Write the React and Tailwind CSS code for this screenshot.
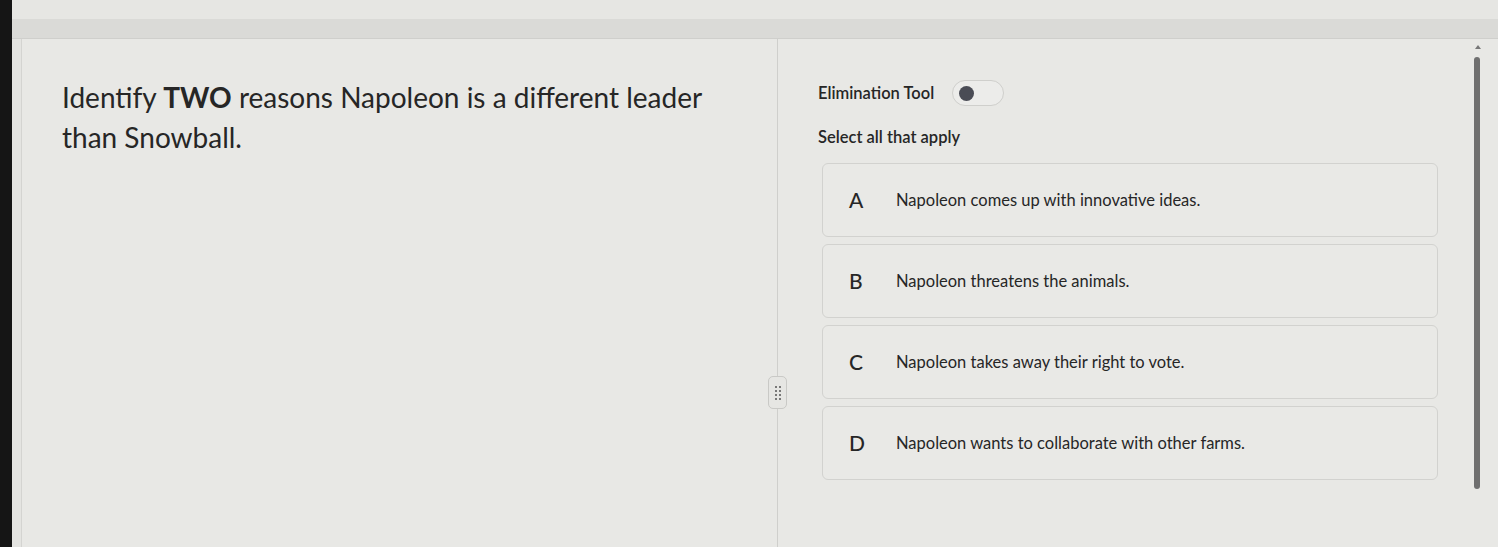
const options = [
  { letter: 'A', text: 'Napoleon comes up with innovative ideas.' },
  { letter: 'B', text: 'Napoleon threatens the animals.' },
  { letter: 'C', text: 'Napoleon takes away their right to vote.' },
  { letter: 'D', text: 'Napoleon wants to collaborate with other farms.' },
]

export default function App() {
  return (
    <div className="flex h-[547px] w-[1498px] overflow-hidden bg-[#e8e8e5] font-['Lato',sans-serif] text-[#262626]">
      <div className="w-[12px] bg-[#151515]" />
      <div className="flex flex-1 flex-col">
        <div className="h-[19px] bg-[#e6e6e3]" />
        <div className="h-[20px] border-b border-[#cfcfcc] bg-[#dadad7]" />
        <div className="flex flex-1">
          <div className="w-[10px] border-r border-[#d4d4d1] bg-[#e4e4e1]" />
          {/* question panel */}
          <div className="relative w-[756px] border-r border-[#cfcfcc] pl-[40px] pt-[38px]">
            <p className="text-[28px] leading-[40px]">
              Identify <span className="font-bold">TWO</span> reasons Napoleon is a different leader
              <br />
              than Snowball.
            </p>
            <div className="absolute right-[-10px] top-[337px] flex h-[33px] w-[19px] items-center justify-center rounded-[5px] border border-[#c9c9c6] bg-[#e6e6e3]">
              <div className="grid grid-cols-2 gap-x-[2px] gap-y-[2px]">
                {Array.from({ length: 8 }).map((_, i) => (
                  <span key={i} className="h-[2px] w-[2px] rounded-full bg-[#555]" />
                ))}
              </div>
            </div>
          </div>
          {/* answer panel */}
          <div className="flex w-[692px] flex-col pl-[40px] pt-[40px]">
            <div className="flex h-[28px] items-center gap-[18px]">
              <span className="text-[16.5px] font-semibold">Elimination Tool</span>
              <div className="flex h-[26px] w-[52px] items-center rounded-full border border-[#cfcfcc] bg-[#ececea] pl-[6px]">
                <span className="h-[15px] w-[15px] rounded-full bg-[#4a4c55]" />
              </div>
            </div>
            <p className="mt-[20px] text-[16.5px] font-semibold leading-[20px]">Select all that apply</p>
            <div className="mt-[16px] flex w-[620px] flex-col gap-[7px] pl-[4px]">
              {options.map((o) => (
                <div
                  key={o.letter}
                  className="flex h-[74px] items-center rounded-[6px] border border-[#d2d2cf] bg-[#e9e9e6] pl-[26px]"
                >
                  <span className="w-[47px] text-[21px] font-medium">{o.letter}</span>
                  <span className="text-[16.5px]">{o.text}</span>
                </div>
              ))}
            </div>
          </div>
          {/* scrollbar */}
          <div className="relative flex-1">
            <div className="absolute left-[5px] top-[6px] h-0 w-0 border-x-[3px] border-b-[4px] border-x-transparent border-b-[#777]" />
            <div className="absolute left-[4px] top-[18px] h-[432px] w-[6px] rounded-full bg-[#6f6f6f]" />
          </div>
        </div>
      </div>
    </div>
  )
}
